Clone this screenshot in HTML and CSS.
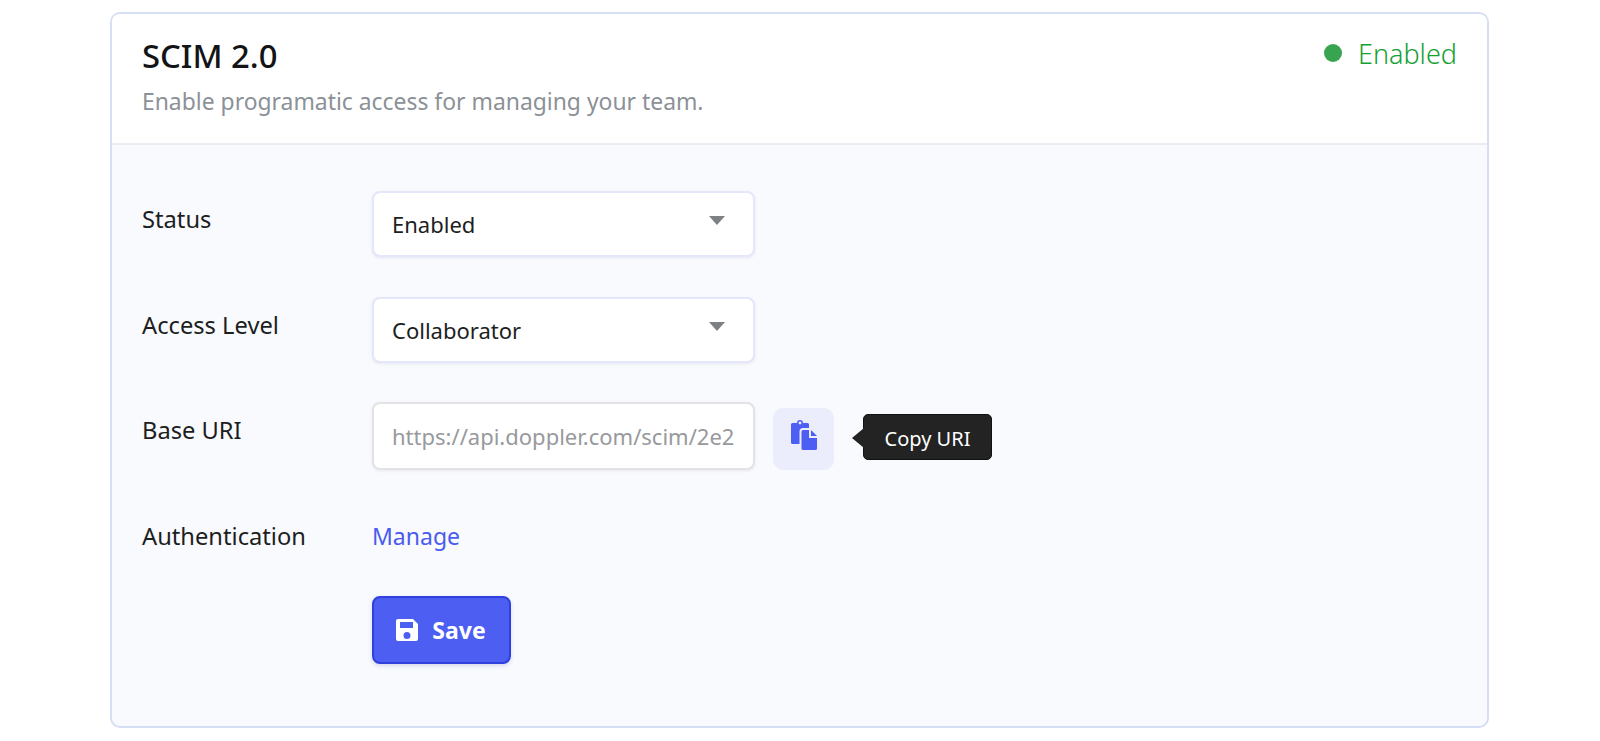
FILE: index.html
```html
<!DOCTYPE html>
<html lang="en">
<head>
<meta charset="utf-8">
<title>SCIM 2.0</title>
<link rel="stylesheet" href="styles.css">
</head>
<body>
<section class="card">
  <header class="card-head">
    <div>
      <h1 class="title">SCIM 2.0</h1>
      <p class="subtitle">Enable programatic access for managing your team.</p>
    </div>
    <div class="state"><span class="dot"></span><span>Enabled</span></div>
  </header>
  <div class="card-body">
    <div class="row">
      <div class="label">Status</div>
      <div class="field select"><span>Enabled</span><span class="caret"></span></div>
    </div>
    <div class="row">
      <div class="label">Access Level</div>
      <div class="field select"><span>Collaborator</span><span class="caret"></span></div>
    </div>
    <div class="row row-uri">
      <div class="label">Base URI</div>
      <div class="field uri"><span>https://api.doppler.com/scim/2e2</span></div>
      <button class="copy" type="button" aria-label="Copy URI">
        <svg width="26" height="30" viewBox="0 0 26 30"><path fill="#4d5ef2" d="M1.500 3H6a3 3 0 0 1 6 0h4.500a1.500 1.500 0 0 1 1.500 1.500V8h-6a3.500 3.500 0 0 0-3.500 3.500V24h-7A1.500 1.500 0 0 1 0 22.500v-18A1.500 1.500 0 0 1 1.500 3z"/><circle cx="9" cy="3" r="1.400" fill="#ebedfc"/><path fill="#4d5ef2" d="M12 10h6v8h8v10.500a1.500 1.500 0 0 1-1.500 1.500H12a1.500 1.500 0 0 1-1.500-1.500v-17A1.500 1.500 0 0 1 12 10z"/><path fill="#4d5ef2" d="M20 10l6 6h-6z"/></svg>
      </button>
      <div class="tip">Copy URI</div>
    </div>
    <div class="row row-auth">
      <div class="label">Authentication</div>
      <a class="link" href="#">Manage</a>
    </div>
    <div class="row row-save">
      <div class="label"></div>
      <button class="save" type="button">
        <svg width="24" height="24" viewBox="0 0 24 24"><path fill="#fff" fill-rule="evenodd" d="M3 1h15l5 5v15a2 2 0 0 1-2 2H3a2 2 0 0 1-2-2V3a2 2 0 0 1 2-2zm2 3v6h13V4zm7 10a3.500 3.500 0 1 0 0 7 3.500 3.500 0 0 0 0-7z"/></svg>
        <span>Save</span>
      </button>
    </div>
  </div>
</section>
</body>
</html>
```
FILE: styles.css
```css
* { box-sizing: border-box; }
html, body { margin: 0; height: 741px; overflow: hidden; background: #fff; }
body { padding: 12px 111px 0 110px; font-family: "Noto Sans", sans-serif; color: #1c1e21; }
.card { height: 716px; border: 2px solid #d5def3; border-radius: 10px; overflow: hidden; display: flex; flex-direction: column; background: #f9fafe; }
.card-head { height: 131px; flex: none; padding: 20px 30px 0 30px; display: flex; justify-content: space-between; background: #fff; border-bottom: 2px solid #ebecf1; }
.title { margin: 0; font-size: 32.800px; line-height: 44px; font-weight: 500; color: #131416; }
.subtitle { margin: 8px 0 0; font-size: 22.900px; line-height: 32px; color: #8b9197; font-weight: 400; }
.state { display: flex; align-items: center; gap: 16px; height: 38px; font-size: 27px; font-weight: 300; color: #16a034; }
.dot { width: 18px; height: 18px; border-radius: 50%; background: #38a44f; }
.card-body { flex: 1; padding: 46px 30px 0; display: flex; flex-direction: column; }
.row { display: flex; align-items: flex-start; height: 66px; margin-bottom: 40px; }
.row:nth-child(2) { margin-bottom: 39px; }
.label { width: 230px; flex: none; font-size: 23.700px; line-height: 56px; color: #1c1e21; }
.field { width: 383px; height: 66px; flex: none; background: #fff; border: 2px solid #e4e6fa; border-radius: 8px; box-shadow: 0 1px 3px rgba(70, 80, 140, 0.1); padding: 0 18px; display: flex; align-items: center; font-size: 22px; justify-content: space-between; }
.caret { width: 0; height: 0; border-left: 8px solid transparent; border-right: 8px solid transparent; border-top: 9px solid #7d8184; margin: 0 10px 8px 0; }
.row-uri { height: 68px; margin-bottom: 38px; }
.uri { height: 68px; border-color: #e3e3e6; color: #97999d; overflow: hidden; white-space: nowrap; }
.copy { width: 61px; height: 62px; margin: 6px 0 0 18px; flex: none; border: 0; border-radius: 10px; background: #ebedfc; display: flex; align-items: center; justify-content: center; padding: 0 0 8px; }
.tip { position: relative; margin: 12px 0 0 29px; width: 129px; height: 46px; flex: none; display: flex; align-items: center; justify-content: center; padding-top: 2px; background: #232323; color: #fff; border: 1px solid #111; border-radius: 5px; font-size: 20px; }
.tip::before { content: ""; position: absolute; left: -12px; top: 13px; border-top: 10px solid transparent; border-bottom: 10px solid transparent; border-right: 12px solid #232323; }
.row-auth { height: 56px; margin-bottom: 32px; }
.link { font-size: 23px; line-height: 56px; color: #4a5bf0; text-decoration: none; }
.save { width: 139px; height: 68px; border: 2px solid #2f40dc; border-radius: 8px; background: #4d5ef2; color: #fff; font: 700 23px "Noto Sans", sans-serif; display: flex; align-items: center; justify-content: center; gap: 13px; padding: 0 2px 0 0; box-shadow: 0 2px 4px rgba(60, 70, 160, 0.18); }
```
